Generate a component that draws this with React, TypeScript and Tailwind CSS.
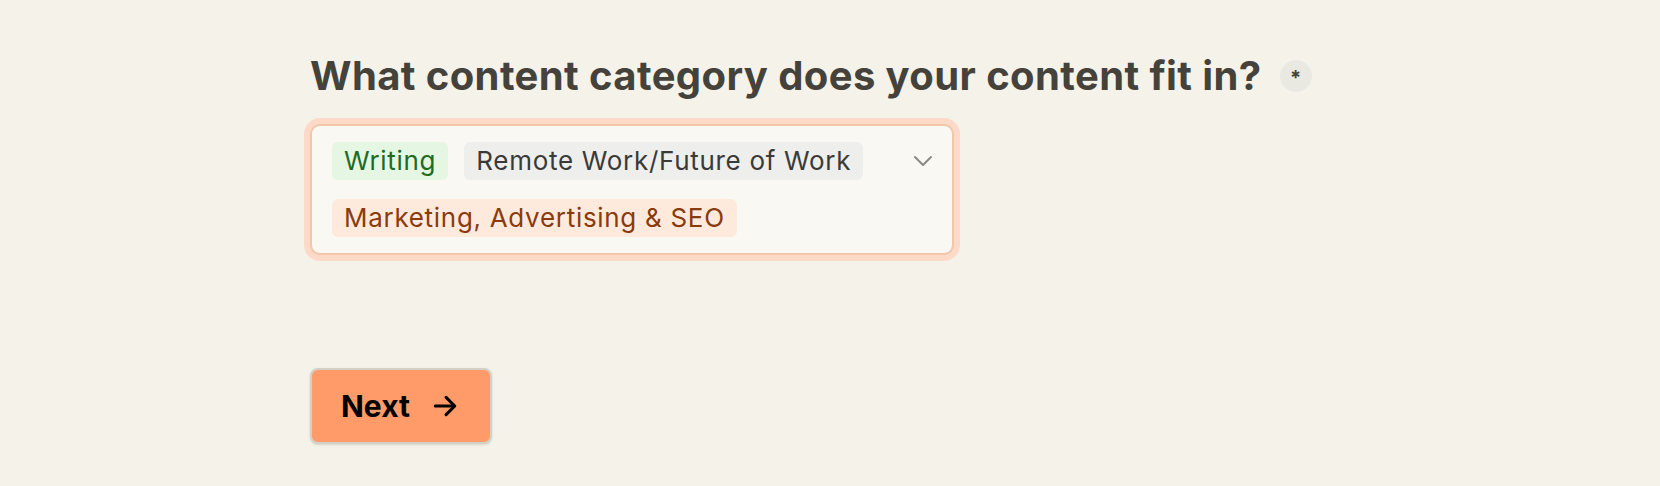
import React from 'react';

const Tag: React.FC<{ label: string; className: string }> = ({ label, className }) => (
    <span className={`flex h-[38px] items-center rounded-md px-3 text-[26px] leading-none tracking-[0.7px] ${className}`}>
        {label}
    </span>
);

export default function App() {
    return (
        <div className="min-h-[486px] w-full bg-[#f5f2ea] font-['Inter',sans-serif]">
            <div className="mx-auto w-[1040px] pt-[52px]">
                {/* question */}
                <div className="flex items-center gap-[18px]">
                    <h1 className="text-[40px] font-bold leading-[48px] tracking-[0.4px] text-[#44423b]">
                        What content category does your content fit in?
                    </h1>
                    <span className="flex h-8 w-8 items-center justify-center rounded-full bg-[#e9e8e1] pt-[3px] text-[20px] font-bold text-[#44423b]">
                        *
                    </span>
                </div>

                {/* multi select */}
                <div className="mt-[24px] w-[644px] rounded-[10px] border-2 border-[#f3c6ab] bg-[#faf8f3] py-[16px] pl-[20px] pr-[19px] ring-[6px] ring-[#fcdac7]">
                    <div className="flex items-start justify-between">
                        <div className="flex w-[560px] flex-wrap gap-x-4 gap-y-[19px]">
                            <Tag label="Writing" className="bg-[#e5f6e3] text-[#1e6b1f]" />
                            <Tag label="Remote Work/Future of Work" className="bg-[#eeeeec] text-[#3a3a38]" />
                            <Tag label="Marketing, Advertising & SEO" className="bg-[#fdeadd] text-[#8a3b0c]" />
                        </div>
                        <svg width="20" height="20" viewBox="0 0 20 20" className="mt-[9px] text-[#8c8a85]">
                            <path d="M2 6l8 8 8-8" fill="none" stroke="currentColor" strokeWidth="2" strokeLinecap="round" strokeLinejoin="round" />
                        </svg>
                    </div>
                </div>

                {/* next */}
                <button className="mt-[113px] flex h-[76px] items-center gap-[22px] rounded-lg border-2 border-[#d5d0c6] bg-[#ff9b68] pl-[29px] pr-[32px] text-[30px] font-bold text-black shadow-sm">
                    Next
                    <svg width="26" height="26" viewBox="0 0 24 24" fill="none" stroke="currentColor" strokeWidth="2.8" strokeLinecap="round" strokeLinejoin="round">
                        <path d="M3 12h18M13 4l8 8-8 8" />
                    </svg>
                </button>
            </div>
        </div>
    );
}
